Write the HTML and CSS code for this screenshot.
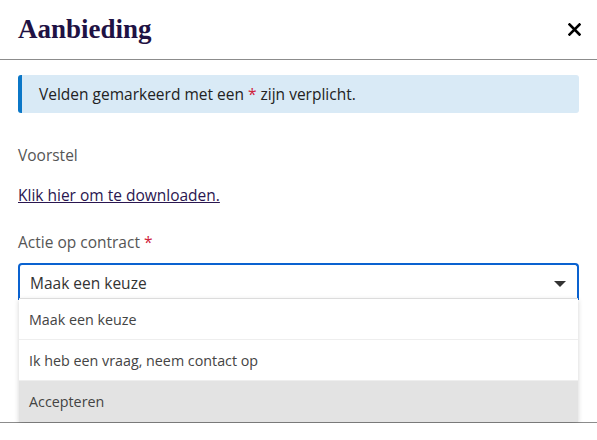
FILE: index.html
```html
<!DOCTYPE html>
<html lang="nl">
<head>
  <meta charset="UTF-8">
  <meta name="viewport" content="width=device-width, initial-scale=1.0">
  <title>Aanbieding</title>
  <link rel="stylesheet" href="styles.css">
</head>
<body>

  <div class="modal">
    <div class="modal-header">
      <h1>Aanbieding</h1>
      <button class="close-btn" aria-label="Sluiten">
        <svg width="13" height="13" viewBox="0 0 13 13">
          <path d="M1.5 1.5 L11.5 11.5 M11.5 1.5 L1.5 11.5" stroke="#000" stroke-width="2.6" stroke-linecap="square"/>
        </svg>
      </button>
    </div>

    <div class="modal-body">
      <div class="notice">Velden gemarkeerd met een <span class="req">*</span> zijn verplicht.</div>

      <p class="field-label">Voorstel</p>
      <p class="download"><a href="#">Klik hier om te downloaden.</a></p>

      <p class="field-label label-select">Actie op contract <span class="req">*</span></p>
      <div class="select">
        <div class="select-value">
          <span>Maak een keuze</span>
          <span class="caret"></span>
        </div>
        <ul class="options">
          <li>Maak een keuze</li>
          <li>Ik heb een vraag, neem contact op</li>
          <li class="active">Accepteren</li>
        </ul>
      </div>
    </div>

    <div class="modal-footer"></div>
  </div>

</body>
</html>
```

FILE: styles.css
```css
body {
  margin: 0;
  font-family: "Open Sans", "Noto Sans", sans-serif;
  color: #333;
  background-color: #fff;
}

.modal {
  width: 597px;
}

.modal-header {
  display: flex;
  align-items: center;
  justify-content: space-between;
  height: 59px;
  padding: 0 16px 0 18px;
  border-bottom: 1px solid #8c8c8c;
}

h1 {
  margin: 0;
  font-family: "Liberation Serif", "DejaVu Serif", serif;
  font-size: 27px;
  font-weight: bold;
  color: #1f1244;
}

.close-btn {
  display: flex;
  padding: 0;
  border: none;
  background: none;
  cursor: pointer;
}

.modal-body {
  padding: 15px 18px 0;
}

.notice {
  height: 38px;
  line-height: 38px;
  padding-left: 17px;
  border-left: 4px solid #0b77c7;
  border-radius: 3px;
  background-color: #d9eaf6;
  font-size: 15.5px;
  color: #222;
}

.req {
  color: #d0213a;
}

.field-label {
  margin: 32px 0 0;
  font-size: 15.5px;
  color: #555;
  line-height: 20px;
}

.label-select {
  margin-top: 27px;
}

.download {
  margin: 20px 0 0;
  font-size: 15.5px;
  line-height: 20px;
}

.download a {
  color: #2a1650;
  text-decoration: underline;
}

.select {
  position: relative;
  margin-top: 11px;
}

.select-value {
  display: flex;
  align-items: center;
  justify-content: space-between;
  height: 35px;
  padding: 0 11px 0 10px;
  border: 2px solid #0a62d0;
  border-bottom: none;
  border-radius: 4px 4px 0 0;
  font-size: 15.5px;
  color: #333;
}

.caret {
  width: 0;
  height: 0;
  border-left: 6px solid transparent;
  border-right: 6px solid transparent;
  border-top: 6px solid #333;
  margin-top: 3px;
}

.options {
  position: absolute;
  top: 35px;
  left: 1px;
  right: 1px;
  margin: 0;
  padding: 0;
  list-style: none;
  background-color: #fff;
  border-top: 1px solid #dcdcdc;
  box-shadow: 0 2px 5px rgba(0, 0, 0, 0.18);
  z-index: 2;
}

.options li {
  height: 40px;
  line-height: 41px;
  padding-left: 10px;
  font-size: 14.3px;
  color: #444;
  border-bottom: 1px solid #eee;
}

.options li.active {
  background-color: #e3e3e3;
  border-bottom: none;
  height: 41px;
}

.modal-footer {
  margin-top: 122px;
  border-top: 1px solid #8c8c8c;
}
```
